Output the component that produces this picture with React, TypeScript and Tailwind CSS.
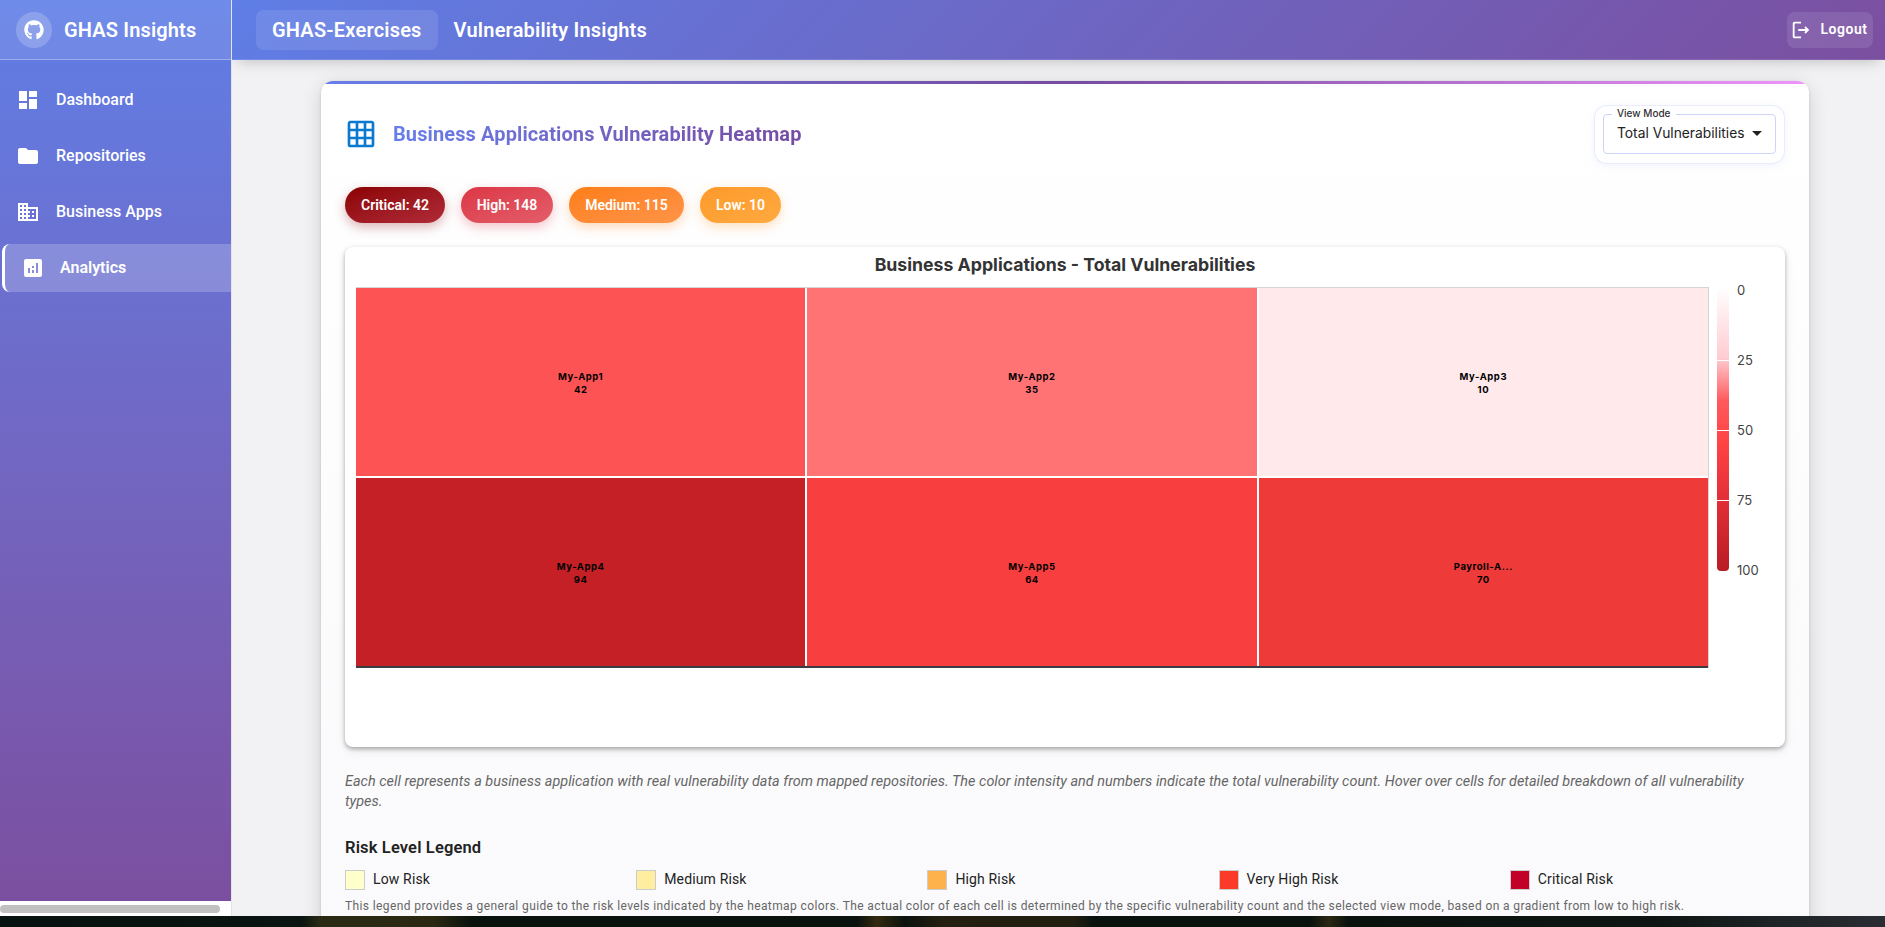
import { FaGithub } from "react-icons/fa";
import {
  MdAnalytics,
  MdBusiness,
  MdDashboard,
  MdFolder,
  MdGridOn,
  MdOutlineLogout,
} from "react-icons/md";

const navItems = [
  { label: "Dashboard", icon: MdDashboard },
  { label: "Repositories", icon: MdFolder },
  { label: "Business Apps", icon: MdBusiness },
];

const pills = [
  { label: "Critical: 42", cls: "w-[100px] bg-gradient-to-br from-[#8b0000] to-[#b02a37] shadow-[0_4px_12px_rgba(139,0,0,0.3)]" },
  { label: "High: 148", cls: "w-[92px] bg-gradient-to-br from-[#dc3545] to-[#e35d6a] shadow-[0_4px_12px_rgba(220,53,69,0.3)]" },
  { label: "Medium: 115", cls: "w-[115px] bg-gradient-to-br from-[#fd7e14] to-[#ff9447] shadow-[0_4px_12px_rgba(253,126,20,0.3)]" },
  { label: "Low: 10", cls: "w-[81px] bg-gradient-to-br from-[#fd9a2a] to-[#ffa940] shadow-[0_4px_12px_rgba(253,154,42,0.3)]" },
];

const cells = [
  { name: "My-App1", value: 42, cls: "bg-[#fd5355]" },
  { name: "My-App2", value: 35, cls: "bg-[#ff7375]" },
  { name: "My-App3", value: 10, cls: "bg-[#ffe9eb]" },
  { name: "My-App4", value: 94, cls: "bg-[#c42026]" },
  { name: "My-App5", value: 64, cls: "bg-[#f83e3f]" },
  { name: "Payroll-A...", value: 70, cls: "bg-[#ee3a39]" },
];

const legend = [
  { label: "Low Risk", cls: "bg-[#ffffcc]" },
  { label: "Medium Risk", cls: "bg-[#ffeda0]" },
  { label: "High Risk", cls: "bg-[#feb24c]" },
  { label: "Very High Risk", cls: "bg-[#fc3a2a]" },
  { label: "Critical Risk", cls: "bg-[#c30028]" },
];

function Sidebar() {
  return (
    <aside className="flex h-full w-[232px] shrink-0 flex-col border-r border-[#e4e4e8] bg-white">
      <div className="h-[901px] bg-gradient-to-b from-[#5f7ee6] to-[#7b4fa0]">
        <div className="flex h-[60px] items-center gap-3 border-b border-white/30 bg-white/10 pl-4">
          <div className="flex h-9 w-9 items-center justify-center rounded-full bg-white/20">
            <FaGithub className="text-[20px] text-white" />
          </div>
          <span className="text-[20px] font-semibold tracking-[0.15px] text-white">GHAS Insights</span>
        </div>
        <nav className="mt-[16px] flex flex-col">
          {navItems.map((item) => (
            <div key={item.label} className="mb-2 flex h-12 items-center pl-[16px] text-white">
              <item.icon className="text-[24px]" />
              <span className="ml-[16px] text-[16px] font-medium">{item.label}</span>
            </div>
          ))}
          <div className="ml-[2px] flex h-12 items-center rounded-l-lg border-l-[3px] border-white bg-white/20 pl-[16px] text-white">
            <MdAnalytics className="text-[24px]" />
            <span className="ml-[15px] text-[16px] font-semibold">Analytics</span>
          </div>
        </nav>
      </div>
      <div className="mt-1 h-2 w-[220px] rounded bg-[#c1c1c1]" />
    </aside>
  );
}

function Topbar() {
  return (
    <header className="relative z-10 flex h-[60px] shrink-0 items-center border-b border-white/10 bg-[linear-gradient(135deg,#5f7ee6,#7b4fa0)] pl-6 pr-3 shadow-[0_6px_16px_-6px_rgba(0,0,0,0.25)]">
      <div className="flex h-10 items-center rounded-lg bg-white/10 px-4 text-[20px] font-semibold tracking-[0.2px] text-white">
        GHAS-Exercises
      </div>
      <div className="ml-4 text-[20px] font-semibold tracking-[0.2px] text-white">Vulnerability Insights</div>
      <button className="ml-auto flex h-9 w-[86px] items-center justify-center gap-[9px] rounded-lg bg-white/10 text-[14px] font-semibold tracking-[0.5px] text-white">
        <MdOutlineLogout className="ml-[-3px] text-[22px]" />
        Logout
      </button>
    </header>
  );
}

function Heatmap() {
  return (
    <div className="mt-6 h-[500px] rounded-lg bg-white px-[11px] pt-[8px] shadow-[0_2px_4px_rgba(0,0,0,0.3),0_4px_12px_rgba(0,0,0,0.08)]">
      <h3 className="text-center text-[17.7px] leading-[20px] font-bold text-[#333] [font-family:Inter,sans-serif]">
        Business Applications - Total Vulnerabilities
      </h3>
      <div className="mt-[12px] flex items-start">
        <div className="w-[1353px] border-t border-r border-[#d5d5d5]">
          <div className="grid grid-cols-3 gap-[2px] border-b-2 border-[#3b3b44]">
            {cells.map((c) => (
              <div
                key={c.name}
                className={`flex h-[188px] flex-col items-center justify-center pt-[2px] text-[9.5px] leading-[13px] font-bold tracking-[0.55px] text-black [font-family:Inter,sans-serif] ${c.cls}`}
              >
                <span>{c.name}</span>
                <span>{c.value}</span>
              </div>
            ))}
          </div>
        </div>
        <div className="relative ml-2 h-[284px] w-[12px] rounded-b-sm bg-[linear-gradient(to_bottom,#ffffff_0%,#ffccd2_25%,#ff5a5e_40%,#ff4343_55%,#e22f38_75%,#b91c24_100%)]">
          {[0, 25, 50, 75, 100].map((t) => (
            <div key={t} className="absolute left-0 flex items-center" style={{ top: t * 2.8 - 3 }}>
              <div className={t > 0 && t < 100 ? "h-px w-3 bg-white" : "h-px w-3"} />
              <span className="ml-2 text-[13px] leading-[12px] text-[#444] [font-family:Inter,sans-serif]">{t}</span>
            </div>
          ))}
        </div>
      </div>
    </div>
  );
}

function Card() {
  return (
    <section className="relative overflow-hidden rounded-xl bg-gradient-to-b from-white to-[#fafafc] px-6 pt-[3px] shadow-[0_1px_3px_rgba(0,0,0,0.14),0_4px_20px_rgba(0,0,0,0.14)]">
      <div className="absolute top-0 right-0 left-0 h-[3px] bg-gradient-to-r from-[#667eea] via-[#764ba2] to-[#f093fb]" />
      <div className="mt-[21px] flex h-[57px] items-center justify-between">
        <div className="flex items-center">
          <MdGridOn className="text-[32px] text-[#0a7ad1]" />
          <h2 className="ml-[16px] bg-gradient-to-r from-[#667eea] to-[#764ba2] bg-clip-text text-[20px] font-bold tracking-[0.11px] text-transparent">
            Business Applications Vulnerability Heatmap
          </h2>
        </div>
        <div className="mt-[1px] mr-[1px] h-[57px] w-[189px] rounded-xl bg-white p-2 shadow-[0_0_0_1px_#e8ecfc,0_2px_8px_rgba(102,126,234,0.1)]">
          <div className="relative flex h-10 items-center justify-between rounded border border-[#cdd6f6] pr-[13px] pl-[13px] text-[13.8px] text-[#222] [font-family:Inter,sans-serif]">
            <span className="absolute -top-2 left-[8px] bg-white px-[5px] text-[10px] leading-3 font-medium text-[#333]">
              View Mode
            </span>
            <span>Total Vulnerabilities</span>
            <span className="h-0 w-0 border-x-[5px] border-t-[5px] border-x-transparent border-t-[#222]" />
          </div>
        </div>
      </div>
      <div className="mt-[25px] flex gap-4">
        {pills.map((p) => (
          <div
            key={p.label}
            className={`flex h-9 items-center justify-center rounded-[18px] text-[14px] font-semibold text-white ${p.cls}`}
          >
            {p.label}
          </div>
        ))}
      </div>
      <Heatmap />
      <p className="mt-[25px] pr-6 text-[14.4px] leading-[20px] tracking-[0.03px] text-[#666] italic">
        Each cell represents a business application with real vulnerability data from mapped repositories. The color
        intensity and numbers indicate the total vulnerability count. Hover over cells for detailed breakdown of all
        vulnerability types.
      </p>
      <h4 className="mt-[26px] text-[16.5px] leading-[20px] font-semibold tracking-[0.15px] text-[#222]">
        Risk Level Legend
      </h4>
      <div className="mt-[11px] grid grid-cols-5 gap-4">
        {legend.map((l) => (
          <div key={l.label} className="flex items-center gap-2">
            <div className={`h-5 w-5 border border-[#ccc] ${l.cls}`} />
            <span className="text-[14px] tracking-[0.15px] text-[#222]">{l.label}</span>
          </div>
        ))}
      </div>
      <p className="mt-[7px] pb-6 text-[12px] leading-[18px] tracking-[0.39px] text-[#666]">
        This legend provides a general guide to the risk levels indicated by the heatmap colors. The actual color of
        each cell is determined by the specific vulnerability count and the selected view mode, based on a gradient
        from low to high risk.
      </p>
    </section>
  );
}

export default function App() {
  return (
    <div className="flex h-[927px] w-[1885px] flex-col overflow-hidden [font-family:Roboto,sans-serif]">
      <div className="flex h-[916px] shrink-0">
        <Sidebar />
        <main className="flex min-w-0 flex-1 flex-col overflow-hidden bg-[#f2f2f5]">
          <Topbar />
          <div className="pt-[21px] pr-[76px] pl-[89px]">
            <Card />
          </div>
        </main>
      </div>
      {/* strip of desktop wallpaper below the browser window */}
      <div className="h-[11px] bg-[linear-gradient(to_right,#06120f_0%,#0a1410_16%,#2a2a14_17%,#2a2812_23%,#0a120e_25%,#0a120e_45.5%,#33290f_46.5%,#0a120e_48%,#241f10_50%,#221f10_57%,#0a120e_58%,#0a120e_69.5%,#2b2812_70.5%,#0a120e_71.5%,#0e1512_88%,#1d2326_94%,#2a2d33_100%)]" />
    </div>
  );
}
